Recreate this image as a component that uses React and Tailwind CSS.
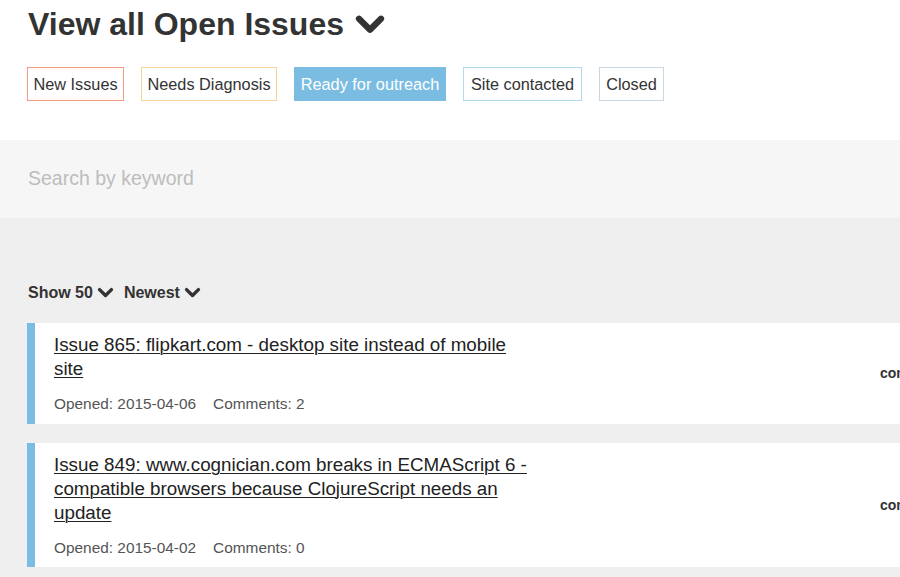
import React from 'react';

function Chevron({ className }) {
  return (
    <svg viewBox="0 0 20 14" className={className} fill="none">
      <polyline points="3,3 10,10 17,3" stroke="currentColor" strokeWidth="4" strokeLinecap="round" strokeLinejoin="round" />
    </svg>
  );
}

const filters = [
  { label: 'New Issues', cls: 'w-[97px] border-[#f59a84] text-[#333]' },
  { label: 'Needs Diagnosis', cls: 'w-[136px] border-[#f4d596] text-[#333]' },
  { label: 'Ready for outreach', cls: 'w-[152px] border-[#7bbde2] bg-[#7bbde2] text-white' },
  { label: 'Site contacted', cls: 'w-[119px] border-[#b3dbef] text-[#333]' },
  { label: 'Closed', cls: 'w-[65px] border-[#c8d6df] text-[#333]' },
];

const issues = [
  { num: 865, title: 'flipkart.com - desktop site instead of mobile site', opened: '2015-04-06', comments: 2 },
  { num: 849, title: 'www.cognician.com breaks in ECMAScript 6 - compatible browsers because ClojureScript needs an update', opened: '2015-04-02', comments: 0 },
];

function IssueCard({ issue }) {
  return (
    <div className="flex bg-white border-l-[8px] border-[#7bbde2] min-h-[101px] w-[900px]">
      <div className="w-[502px] shrink-0 pl-[19px] pt-[10px] pb-[8px]">
        <a className="block text-[18.8px] leading-[24px] text-[#222] underline underline-offset-2 decoration-1">
          Issue {issue.num}: {issue.title}
        </a>
        <div className="mt-[11px] text-[15.4px] text-[#555] flex gap-[17px]">
          <span>Opened: {issue.opened}</span>
          <span>Comments: {issue.comments}</span>
        </div>
      </div>
      <div className="flex-1 flex items-center pl-[343px]">
        <span className="text-[14px] font-bold text-[#333] whitespace-nowrap">comments</span>
      </div>
    </div>
  );
}

export default function App() {
  return (
    <div className="w-[900px] h-[577px] overflow-hidden bg-[#efefef]" style={{ fontFamily: '"Liberation Sans", Arial, sans-serif' }}>
      <div className="bg-white px-[28px] pt-[3px] pb-[39px]">
        <h1 className="flex items-center gap-[10px] text-[32px] font-bold text-[#333] leading-[42px]">
          View all Open Issues
          <Chevron className="w-[32px] h-[22px] mt-[2px]" />
        </h1>
        <div className="flex gap-[17px] mt-[22px] -ml-[1px]">
          {filters.map((f) => (
            <button key={f.label} className={`border h-[34px] text-[16.3px] text-center whitespace-nowrap ${f.cls}`}>
              {f.label}
            </button>
          ))}
        </div>
      </div>
      <div className="bg-[#f6f6f6] h-[78px] flex items-center px-[28px]">
        <input
          placeholder="Search by keyword"
          className="bg-transparent outline-none text-[19.5px] placeholder-[#bdbdbd] w-full"
        />
      </div>
      <div className="pt-[63px] pl-[27px]">
        <div className="flex items-center gap-[10px] text-[16px] font-bold text-[#333] pl-[1px]">
          <span className="flex items-center gap-[4px]">Show 50 <Chevron className="w-[17px] h-[12px]" /></span>
          <span className="flex items-center gap-[4px]">Newest <Chevron className="w-[17px] h-[12px]" /></span>
        </div>
        <div className="mt-[18px] flex flex-col gap-[19px]">
          {issues.map((i) => (
            <IssueCard key={i.num} issue={i} />
          ))}
        </div>
      </div>
    </div>
  );
}
